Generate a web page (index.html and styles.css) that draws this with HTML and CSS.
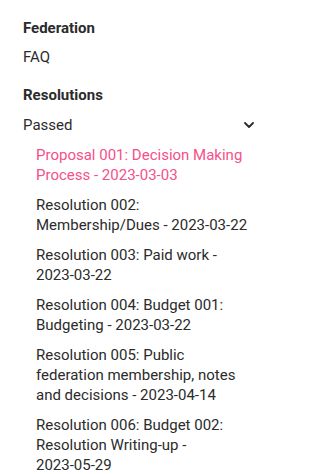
FILE: index.html
```html
<!DOCTYPE html>
<html lang="en">
<head>
<meta charset="utf-8">
<link rel="stylesheet" href="styles.css">
</head>
<body>
<nav class="nav">
  <div class="group">
    <div class="heading heading-first">Federation</div>
    <a class="link" href="#">FAQ</a>
  </div>
  <div class="group group-second">
    <div class="heading">Resolutions</div>
    <div class="category">
      <span>Passed</span>
      <svg class="chevron" width="10" height="6" viewBox="0 0 10 6"><polyline points="1,1 5,5 9,1" fill="none" stroke="#2b2b2b" stroke-width="1.8" stroke-linecap="round" stroke-linejoin="round"/></svg>
    </div>
    <ul class="sub">
      <li><a class="sublink active" href="#">Proposal 001: Decision Making Process - <span class="date">2023-03-03</span></a></li>
      <li><a class="sublink" href="#">Resolution 002: Membership/Dues - <span class="date">2023-03-22</span></a></li>
      <li><a class="sublink" href="#">Resolution 003: Paid work - <span class="date">2023-03-22</span></a></li>
      <li><a class="sublink" href="#">Resolution 004: Budget 001: Budgeting - <span class="date">2023-03-22</span></a></li>
      <li><a class="sublink" href="#">Resolution 005: Public federation membership, notes and decisions - <span class="date">2023-04-14</span></a></li>
      <li><a class="sublink" href="#">Resolution 006: Budget 002: Resolution Writing-up - <span class="date">2023-05-29</span></a></li>
    </ul>
  </div>
</nav>
</body>
</html>
```

FILE: styles.css
```css
html, body {
  margin: 0;
  padding: 0;
  background: #ffffff;
}
body {
  font-family: Roboto, "Liberation Sans", sans-serif;
  font-size: 15px;
  line-height: 20px;
  color: #2b2b2b;
  width: 295px;
  height: 474px;
  overflow: hidden;
}
.nav {
  padding: 18px 38px 0 23px;
}
.group {
  display: flex;
  flex-direction: column;
}
.group-second {
  margin-top: 18px;
}
.heading {
  font-weight: 700;
  margin-bottom: 10px;
}
.heading-first {
  margin-bottom: 9px;
}
.link {
  color: #2b2b2b;
  text-decoration: none;
}
.category {
  display: flex;
  align-items: center;
  justify-content: space-between;
  height: 20px;
}
.chevron {
  margin-right: 3px;
}
.sub {
  list-style: none;
  margin: 0;
  padding: 0 2px 0 13px;
}
.sub li {
  margin-top: 10px;
}
.sublink {
  color: #2b2b2b;
  text-decoration: none;
  display: block;
}
.sublink.active {
  color: #f5508a;
}
.date {
  white-space: nowrap;
}
```
